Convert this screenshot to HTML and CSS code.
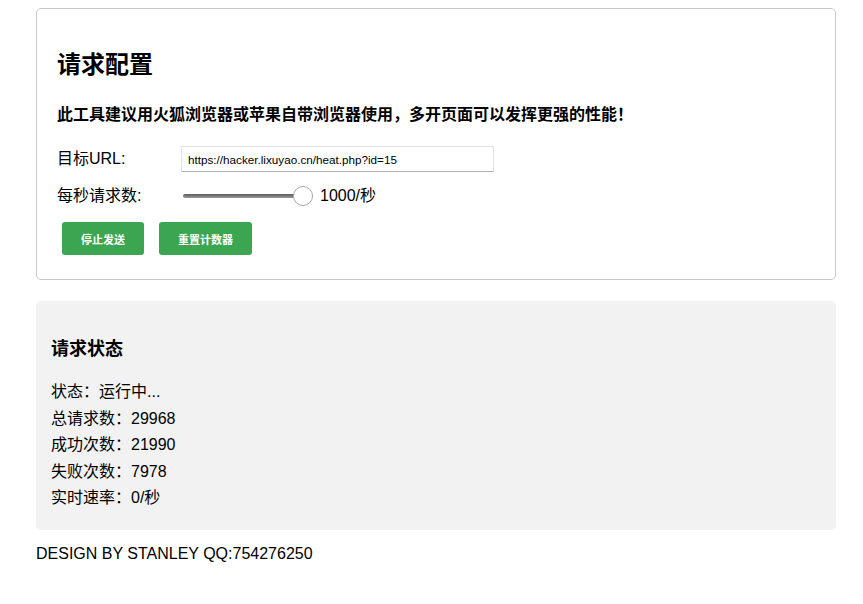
FILE: index.html
```html
<!DOCTYPE html>
<html lang="zh-CN">
<head>
<meta charset="utf-8">
<title>请求配置</title>
<link rel="stylesheet" href="styles.css">
</head>
<body>
<div class="container">
  <div class="card config">
    <h2 class="title">请求配置</h2>
    <div class="notice">此工具建议用火狐浏览器或苹果自带浏览器使用，多开页面可以发挥更强的性能！</div>
    <div class="row row-url">
      <label class="label">目标URL:</label>
      <input class="url-input" type="text" value="https://hacker.lixuyao.cn/heat.php?id=15">
    </div>
    <div class="row row-rate">
      <label class="label">每秒请求数:</label>
      <input class="slider" type="range" min="1" max="1000" value="1000">
      <span class="rate-value">1000/秒</span>
    </div>
    <div class="buttons">
      <button class="btn">停止发送</button>
      <button class="btn">重置计数器</button>
    </div>
  </div>
  <div class="card status">
    <h3 class="status-title">请求状态</h3>
    <div class="line">状态：运行中...</div>
    <div class="line">总请求数：29968</div>
    <div class="line">成功次数：21990</div>
    <div class="line">失败次数：7978</div>
    <div class="line">实时速率：0/秒</div>
  </div>
  <div class="footer">DESIGN BY STANLEY QQ:754276250</div>
</div>
</body>
</html>
```
FILE: styles.css
```css
html, body {
  background: #ffffff;
}
body {
  margin: 8px 27px 8px 36px;
  font-family: "Liberation Sans", "Noto Sans CJK SC", sans-serif;
  font-size: 16px;
  color: #000;
}
.container {
  width: 800px;
}
.card {
  box-sizing: border-box;
  border-radius: 5px;
}
.config {
  border: 1px solid #c8c8c8;
  padding: 20px;
  height: 272px;
}
.title {
  margin: 22px 0 0;
  font-size: 24px;
  line-height: 28px;
  font-weight: bold;
}
.notice {
  margin-top: 26px;
  font-size: 16px;
  line-height: 20px;
  font-weight: bold;
}
.row {
  display: flex;
  align-items: center;
}
.row-url {
  margin-top: 21px;
  height: 26px;
}
.row-rate {
  margin-top: 13px;
  height: 22px;
}
.label {
  width: 124px;
  flex: none;
  line-height: 20px;
}
.url-input {
  box-sizing: border-box;
  width: 313px;
  height: 26px;
  margin: 0;
  padding: 0 6px;
  border: 1px solid #e2e2e2;
  border-bottom-color: #b0b0b0;
  border-radius: 0;
  font-family: "Liberation Sans", sans-serif;
  font-size: 11.7px;
  color: #000;
  outline: none;
}
.slider {
  -webkit-appearance: none;
  appearance: none;
  width: 130px;
  height: 22px;
  margin: 0 0 0 2px;
  background: transparent;
}
.slider::-webkit-slider-runnable-track {
  height: 4px;
  border-radius: 2px;
  background: linear-gradient(#5a5a5a, #9a9a9a);
}
.slider::-webkit-slider-thumb {
  -webkit-appearance: none;
  width: 20px;
  height: 20px;
  margin-top: -8px;
  border-radius: 50%;
  background: #fff;
  border: 1px solid #a8a8a8;
  box-sizing: border-box;
}
.rate-value {
  margin-left: 7px;
  line-height: 20px;
}
.buttons {
  display: flex;
  gap: 15px;
  margin-top: 10px;
  padding-left: 5px;
}
.btn {
  margin: 5px 0;
  height: 33px;
  padding: 0 19px;
  border: none;
  border-radius: 3px;
  background: #3ca551;
  color: #fff;
  font-family: "Liberation Sans", "Noto Sans CJK SC", sans-serif;
  font-size: 11px;
  font-weight: bold;
  cursor: pointer;
}
.status {
  margin-top: 21px;
  background: #f2f2f2;
  padding: 16px 15px 18px;
}
.status-title {
  margin: 21px 0 19px;
  font-size: 18px;
  line-height: 22px;
  font-weight: bold;
}
.line {
  line-height: 26.5px;
}
.footer {
  margin-top: 15px;
  line-height: 18px;
}
```
